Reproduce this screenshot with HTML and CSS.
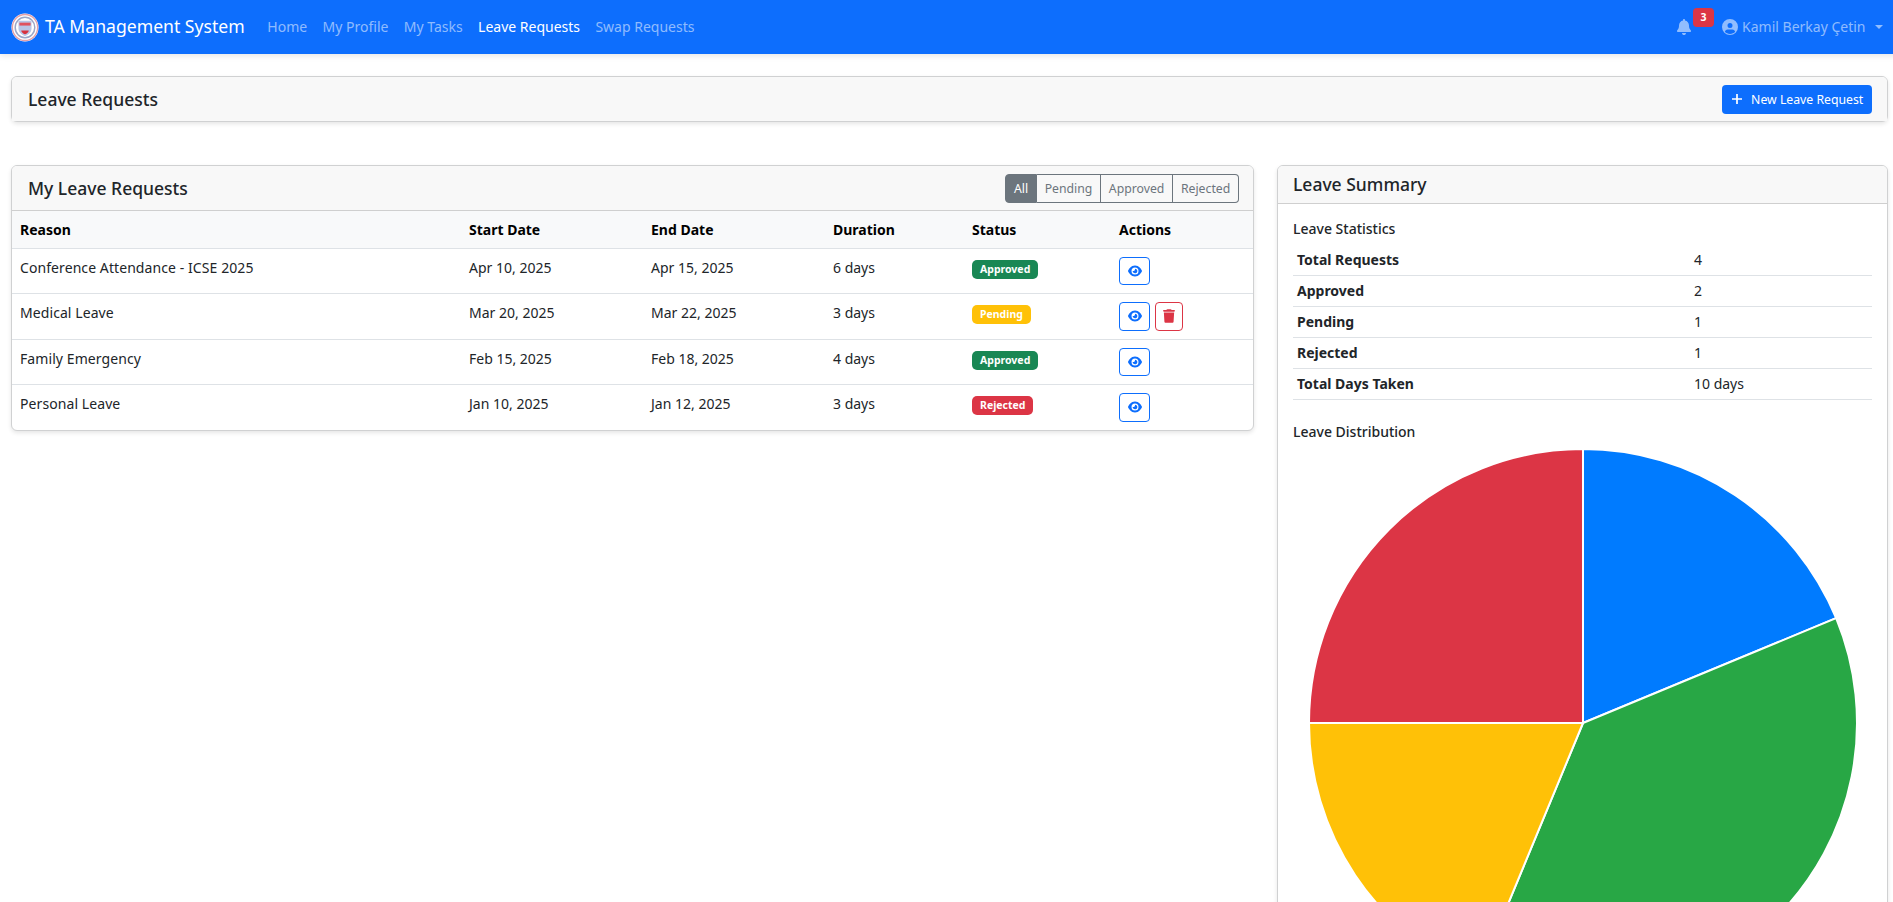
FILE: index.html
```html
<!DOCTYPE html>
<html lang="en">
<head>
<meta charset="utf-8">
<title>Leave Requests</title>
<link rel="stylesheet" href="styles.css">
</head>
<body>
<nav class="navbar">
  <a class="brand">
    <svg class="logo" viewBox="0 0 30 30" width="28" height="29" preserveAspectRatio="none">
      <circle cx="15" cy="15" r="14.5" fill="#fff"/>
      <circle cx="15" cy="15" r="13.5" fill="none" stroke="#e4a0a8" stroke-width="1.4"/>
      <circle cx="15" cy="15" r="10.5" fill="none" stroke="#9aa6c8" stroke-width="1.6"/>
      <path d="M8 8h14v8c0 4-3 6-7 8-4-2-7-4-7-8z" fill="#b9c6e6"/>
      <rect x="9" y="10" width="12" height="3" fill="#e0525e"/>
      <path d="M11 18h8c0 2-2 3-4 4-2-1-4-2-4-4z" fill="#d8323f"/>
    </svg>
    <span class="brand-text">TA Management System</span>
  </a>
  <ul class="nav-links">
    <li><a>Home</a></li>
    <li><a>My Profile</a></li>
    <li><a>My Tasks</a></li>
    <li><a class="active">Leave Requests</a></li>
    <li><a>Swap Requests</a></li>
  </ul>
  <div class="nav-right">
    <span class="bell">
      <svg viewBox="0 0 448 512" width="14" height="16"><path fill="currentColor" d="M224 0c-17.700 0-32 14.300-32 32v19.200C119 66 64 130.600 64 208v18.800c0 47-17.300 92.400-48.500 127.600l-7.400 8.300c-8.400 9.400-10.400 22.900-5.300 34.400S19.400 416 32 416h384c12.600 0 24-7.400 29.200-18.900s3.100-25-5.300-34.400l-7.400-8.300C401.300 319.200 384 273.900 384 226.800V208c0-77.400-55-142-128-156.800V32c0-17.700-14.300-32-32-32zm45.300 493.300c12-12 18.700-28.300 18.700-45.300H160c0 17 6.700 33.300 18.700 45.300S207 512 224 512s33.300-6.700 45.300-18.700z"/></svg>
      <span class="count">3</span>
    </span>
    <a class="user">
      <svg viewBox="0 0 512 512" width="16" height="16"><path fill="currentColor" d="M256 512a256 256 0 1 0 0-512 256 256 0 1 0 0 512zm-78-176h156c44 0 79 32 86 73-41 42-99 71-164 71s-123-29-164-71c7-41 42-73 86-73zm78-208a80 80 0 1 1 0 160 80 80 0 1 1 0-160z"/></svg>
      <span class="user-name">Kamil Berkay Çetin</span>
      <span class="caret"></span>
    </a>
  </div>
</nav>

<main class="page">
  <section class="card title-card">
    <div class="card-header title-head">
      <h1 class="h-main">Leave Requests</h1>
      <button class="btn-new">
        <svg viewBox="0 0 12 12" width="12" height="12"><path d="M6 1v10M1 6h10" stroke="#fff" stroke-width="1.7" fill="none"/></svg>
        New Leave Request
      </button>
    </div>
  </section>

  <div class="columns">
    <section class="card requests">
      <div class="card-header req-head">
        <h2 class="h-main">My Leave Requests</h2>
        <div class="filter">
          <button class="on">All</button><button>Pending</button><button>Approved</button><button>Rejected</button>
        </div>
      </div>
      <table class="req-table">
        <colgroup><col class="c1"><col class="c2"><col class="c3"><col class="c4"><col class="c5"><col class="c6"></colgroup>
        <thead>
          <tr><th>Reason</th><th>Start Date</th><th>End Date</th><th>Duration</th><th>Status</th><th>Actions</th></tr>
        </thead>
        <tbody>
          <tr>
            <td>Conference Attendance - ICSE 2025</td><td>Apr 10, 2025</td><td>Apr 15, 2025</td><td>6 days</td>
            <td><span class="badge green">Approved</span></td>
            <td><span class="act"><button class="ib view"><svg viewBox="0 0 576 512" width="14" height="14"><use href="#eye"/></svg></button></span></td>
          </tr>
          <tr>
            <td>Medical Leave</td><td>Mar 20, 2025</td><td>Mar 22, 2025</td><td>3 days</td>
            <td><span class="badge yellow">Pending</span></td>
            <td><span class="act"><button class="ib view"><svg viewBox="0 0 576 512" width="14" height="14"><use href="#eye"/></svg></button><button class="ib del"><svg viewBox="0 0 448 512" width="12" height="14"><path fill="currentColor" d="M135.200 17.700L128 32H32C14.300 32 0 46.300 0 64s14.300 32 32 32h384c17.700 0 32-14.300 32-32s-14.300-32-32-32h-96l-7.200-14.300C307.400 6.800 296.300 0 284.200 0H163.800c-12.100 0-23.200 6.800-28.600 17.700zM416 128H32l21.200 339c1.600 25.300 22.600 45 47.900 45h245.800c25.300 0 46.300-19.700 47.900-45L416 128z"/></svg></button></span></td>
          </tr>
          <tr>
            <td>Family Emergency</td><td>Feb 15, 2025</td><td>Feb 18, 2025</td><td>4 days</td>
            <td><span class="badge green">Approved</span></td>
            <td><span class="act"><button class="ib view"><svg viewBox="0 0 576 512" width="14" height="14"><use href="#eye"/></svg></button></span></td>
          </tr>
          <tr>
            <td>Personal Leave</td><td>Jan 10, 2025</td><td>Jan 12, 2025</td><td>3 days</td>
            <td><span class="badge red">Rejected</span></td>
            <td><span class="act"><button class="ib view"><svg viewBox="0 0 576 512" width="14" height="14"><use href="#eye"/></svg></button></span></td>
          </tr>
        </tbody>
      </table>
    </section>

    <section class="card summary">
      <div class="card-header sum-head"><h2 class="h-main">Leave Summary</h2></div>
      <div class="card-body">
        <h3 class="h-sub">Leave Statistics</h3>
        <table class="stats">
          <tr><th>Total Requests</th><td>4</td></tr>
          <tr><th>Approved</th><td>2</td></tr>
          <tr><th>Pending</th><td>1</td></tr>
          <tr><th>Rejected</th><td>1</td></tr>
          <tr><th>Total Days Taken</th><td>10 days</td></tr>
        </table>
        <h3 class="h-sub dist">Leave Distribution</h3>
        <svg class="pie" viewBox="-274 -274 548 548" width="548" height="548">
          <path d="M0 0V-274A274 274 0 0 1 253.140 -104.860Z" fill="#007bff" stroke="#fff" stroke-width="2"/>
          <path d="M0 0L253.140 -104.860A274 274 0 0 1 -104.860 253.140Z" fill="#28a745" stroke="#fff" stroke-width="2"/>
          <path d="M0 0L-104.860 253.140A274 274 0 0 1 -274 0Z" fill="#ffc107" stroke="#fff" stroke-width="2"/>
          <path d="M0 0H-274A274 274 0 0 1 0 -274Z" fill="#dc3545" stroke="#fff" stroke-width="2"/>
        </svg>
      </div>
    </section>
  </div>
</main>

<svg class="defs" width="0" height="0">
  <symbol id="eye" viewBox="0 0 576 512"><path fill="currentColor" d="M288 32c-80.800 0-145.500 36.800-192.600 80.600C48.600 156 17.300 208 2.500 243.700c-3.300 7.900-3.300 16.700 0 24.600C17.300 304 48.600 356 95.400 399.400 142.500 443.200 207.200 480 288 480s145.500-36.800 192.600-80.600c46.800-43.500 78.100-95.400 93-131.100 3.300-7.900 3.300-16.700 0-24.600-14.900-35.700-46.200-87.700-93-131.100C433.500 68.800 368.800 32 288 32zM144 256a144 144 0 1 1 288 0 144 144 0 1 1-288 0zm144-64c0 35.300-28.700 64-64 64-7.100 0-13.900-1.200-20.300-3.300-5.500-1.800-11.900 1.600-11.700 7.400.3 6.900 1.300 13.800 3.200 20.700 13.700 51.200 66.400 81.600 117.600 67.900s81.600-66.400 67.900-117.600c-11.100-41.500-47.800-69.400-88.600-71.100-5.800-.2-9.200 6.100-7.400 11.700 2.100 6.400 3.300 13.200 3.300 20.300z"/></symbol>
</svg>
</body>
</html>
```

FILE: styles.css
```css
* { box-sizing: border-box; }
html, body { margin: 0; padding: 0; overflow: hidden; height: 100%; }
body {
  font-family: "Noto Sans", "Open Sans", sans-serif;
  font-size: 14px;
  color: #212529;
  background: #fff;
  width: 1899px;
}
button { font-family: inherit; }
.defs { position: absolute; }

.navbar {
  height: 54px;
  background: #0d6efd;
  display: flex;
  align-items: center;
  padding: 0 12px 0 11px;
  box-shadow: 0 2px 6px rgba(0,0,0,.1);
}
.brand {
  display: flex;
  align-items: center;
  gap: 6px;
  color: #fff;
  font-size: 17.600px;
  white-space: nowrap;
  margin-right: 15px;
}
.brand-text { margin-bottom: 3px; }
.logo { display: block; margin-top: 1px; }
.nav-links {
  display: flex;
  list-style: none;
  margin: 0;
  padding: 0;
}
.nav-links a {
  display: block;
  padding: 7px 7.700px 9px;
  color: rgba(255,255,255,.55);
  white-space: nowrap;
}
.nav-links a.active { color: #fff; }
.nav-right {
  margin-left: auto;
  margin-right: 4.500px;
  display: flex;
  align-items: center;
  color: rgba(255,255,255,.55);
}
.bell { position: relative; display: flex; margin-right: 31px; margin-bottom: 1px; }
.count {
  position: absolute;
  left: 16px;
  top: -11px;
  width: 21px;
  height: 19px;
  border-radius: 4px;
  background: #dc3545;
  color: #fff;
  font-size: 10.500px;
  font-weight: 700;
  text-align: center;
  line-height: 19px;
}
.user { display: flex; align-items: center; gap: 4px; white-space: nowrap; }
.user-name { margin-bottom: 2px; }
.caret {
  margin-left: 5px;
  border-top: 4.500px solid currentColor;
  border-left: 4.500px solid transparent;
  border-right: 4.500px solid transparent;
}

.page { padding: 22px 11px 0; }
.card {
  background: #fff;
  border: 1px solid #d0d1d2;
  border-radius: 6px;
  box-shadow: 0 2px 4px rgba(0,0,0,.1);
}
.card-header {
  background: #f8f8f8;
  border-bottom: 1px solid #cfcfcf;
  display: flex;
  align-items: center;
  justify-content: space-between;
  border-radius: 5px 5px 0 0;
}
.h-main { margin: 0; font-size: 17.500px; font-weight: 500; }
.title-card { height: 46px; margin-bottom: 43px; }
.title-head { height: 44px; padding: 0 15px 0 16px; border-bottom: 0; }
.btn-new {
  height: 29px;
  border: 0;
  border-radius: 4px;
  background: #0d6efd;
  color: #fff;
  font-size: 12.250px;
  padding: 0 8.750px;
  display: flex;
  align-items: center;
  gap: 8px;
}

.columns { display: grid; grid-template-columns: 1243px 611px; column-gap: 23px; align-items: start; }
.req-head { height: 45px; padding: 0 14px 0 16px; }
.filter { display: flex; }
.filter button {
  height: 29px;
  border: 1px solid #6c757d;
  border-left-width: 0;
  background: transparent;
  color: #6c757d;
  font-size: 12.250px;
  padding: 0 7.750px;
}
.filter button:first-child { border-left-width: 1px; border-radius: 4px 0 0 4px; }
.filter button:last-child { border-radius: 0 4px 4px 0; }
.filter button.on { background: #6c757d; color: #fff; }

.req-table { width: 100%; border-collapse: collapse; table-layout: fixed; }
.c1 { width: 449px; }
.c2 { width: 182px; }
.c3 { width: 182px; }
.c4 { width: 139px; }
.c5 { width: 147px; }
.req-table th {
  background: #f8f9fa;
  color: #000;
  text-align: left;
  font-weight: 700;
  height: 37px;
  padding: 0 8px;
  border-bottom: 1px solid #dee2e6;
}
.req-table td {
  padding: 8px;
  vertical-align: top;
  border-bottom: 1px solid #dee2e6;
  line-height: 22.500px;
}
.req-table td:first-child { letter-spacing: .08px; }
.req-table tr:last-child td { border-bottom: 0; }
.badge {
  display: inline-block;
  height: 19px;
  padding: 0 8px;
  border-radius: 5px;
  color: #fff;
  font-size: 10.500px;
  font-weight: 700;
  line-height: 19px;
  vertical-align: top;
  margin-top: 3px;
}
.green { background: #198754; }
.yellow { background: #ffc107; }
.red { background: #dc3545; }
.act { display: flex; gap: 5px; }
.ib {
  height: 28.500px;
  border-radius: 4px;
  background: #fff;
  padding: 0;
  display: flex;
  align-items: center;
  justify-content: center;
}
.view { width: 31px; border: 1px solid #0d6efd; color: #0d6efd; }
.del { width: 28px; border: 1px solid #dc3545; color: #dc3545; }

.sum-head { height: 38px; padding: 0 15px 1px; }
.card-body { padding: 16px 15px 0; }
.h-sub { margin: 0 0 7px; font-size: 14px; font-weight: 500; line-height: 17px; }
.stats { width: 100%; border-collapse: collapse; table-layout: fixed; }
.stats th, .stats td {
  height: 31px;
  padding: 0 4px;
  text-align: left;
  border-bottom: 1px solid #dee2e6;
}
.stats th { width: 397px; font-weight: 700; }
.dist { margin-top: 23px; margin-bottom: 9px; }
.pie { display: block; margin: 0 auto; }
```
